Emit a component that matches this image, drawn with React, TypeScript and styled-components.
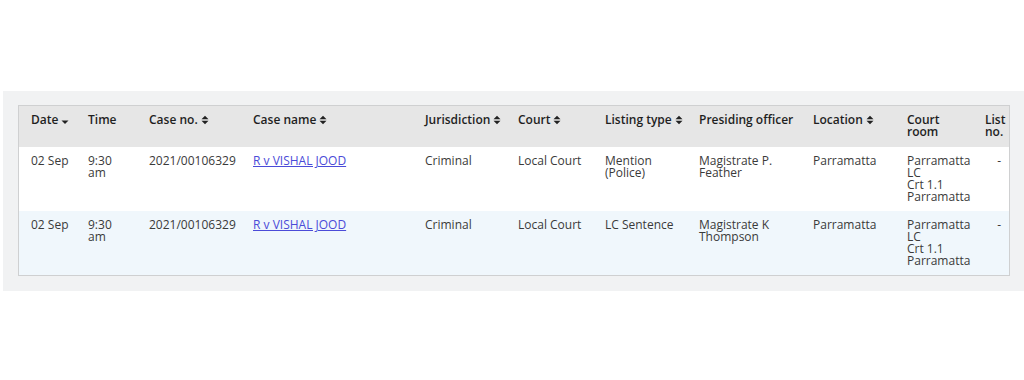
import styled, { createGlobalStyle } from 'styled-components';

const GlobalStyle = createGlobalStyle`
  body {
    margin: 0;
    background: #fff;
    font-family: "Open Sans", "Noto Sans", sans-serif;
  }
`;

const Page = styled.div`
  padding-top: 91px;
  padding-left: 3px;
`;

const Panel = styled.div`
  background: #f1f2f3;
  padding: 14px 14px 15px 15px;
`;

const Frame = styled.div`
  border: 1px solid #cfd0d1;
  background: #fff;
`;

const Table = styled.table`
  width: 100%;
  border-collapse: collapse;
  table-layout: fixed;
  font-size: 12px;
  line-height: 12px;
  color: #3a3a3a;
`;

const HeadRow = styled.tr`
  background: #e6e6e6;
`;

const HeadCell = styled.th`
  text-align: left;
  vertical-align: top;
  font-weight: 600;
  color: #1f1f1f;
  padding: 8px 12px 9px 12px;
  height: 24px;
`;

const HeadLabel = styled.span<{ $wrap?: boolean }>`
  white-space: ${p => (p.$wrap ? 'normal' : 'nowrap')};
`;

const Row = styled.tr<{ $shaded?: boolean }>`
  background: ${p => (p.$shaded ? '#f0f7fc' : '#fff')};
`;

const Cell = styled.td<{ $align?: 'left' | 'right'; $padRight?: number }>`
  text-align: ${p => p.$align ?? 'left'};
  vertical-align: top;
  padding: 8px ${p => p.$padRight ?? 2}px 8px 12px;
  height: 48px;
`;

// room name, room number and venue each start on their own line
const RoomCell = styled(Cell)`
  white-space: pre-line;
`;

const CaseLink = styled.a`
  color: #4b4bd8;
  text-decoration: underline;
`;

const SortIcon = styled.svg`
  display: inline-block;
  margin-left: 3px;
  vertical-align: -1px;
`;

type Sort = 'none' | 'both' | 'desc';

function SortMark({ kind }: { kind: Sort }) {
  if (kind === 'none') return null;
  if (kind === 'desc') {
    return (
      <SortIcon width="8" height="9" viewBox="0 0 8 9">
        <path d="M0.5 4.5 H7.5 L4 8 Z" fill="#222" />
      </SortIcon>
    );
  }
  return (
    <SortIcon width="8" height="10" viewBox="0 0 8 10">
      <path d="M0.5 4.3 L4 0.8 L7.5 4.3 Z" fill="#222" />
      <path d="M0.5 5.7 H7.5 L4 9.2 Z" fill="#222" />
    </SortIcon>
  );
}

const columns: { label: string; width: number; sort: Sort; wrap?: boolean }[] = [
  { label: 'Date', width: 57, sort: 'desc' },
  { label: 'Time', width: 61, sort: 'none' },
  { label: 'Case no.', width: 104, sort: 'both' },
  { label: 'Case name', width: 172, sort: 'both' },
  { label: 'Jurisdiction', width: 93, sort: 'both' },
  { label: 'Court', width: 87, sort: 'both' },
  { label: 'Listing type', width: 94, sort: 'both' },
  { label: 'Presiding officer', width: 114, sort: 'none' },
  { label: 'Location', width: 94, sort: 'both' },
  { label: 'Court room', width: 78, sort: 'none', wrap: true },
  { label: 'List no.', width: 36, sort: 'none', wrap: true },
];

const listings = [
  {
    date: '02 Sep',
    time: '9:30 am',
    caseNo: '2021/00106329',
    caseName: 'R v VISHAL JOOD',
    jurisdiction: 'Criminal',
    court: 'Local Court',
    listingType: 'Mention (Police)',
    officer: 'Magistrate P. Feather',
    location: 'Parramatta',
    room: 'Parramatta LC\nCrt 1.1\nParramatta',
    listNo: '-',
  },
  {
    date: '02 Sep',
    time: '9:30 am',
    caseNo: '2021/00106329',
    caseName: 'R v VISHAL JOOD',
    jurisdiction: 'Criminal',
    court: 'Local Court',
    listingType: 'LC Sentence',
    officer: 'Magistrate K Thompson',
    location: 'Parramatta',
    room: 'Parramatta LC\nCrt 1.1\nParramatta',
    listNo: '-',
  },
];

export default function App() {
  return (
    <>
      <GlobalStyle />
      <Page>
        <Panel>
          <Frame>
            <Table>
              <colgroup>
                {columns.map(c => (
                  <col key={c.label} style={{ width: c.width }} />
                ))}
              </colgroup>
              <thead>
                <HeadRow>
                  {columns.map(c => (
                    <HeadCell key={c.label}>
                      <HeadLabel $wrap={c.wrap}>
                        {c.label}
                        <SortMark kind={c.sort} />
                      </HeadLabel>
                    </HeadCell>
                  ))}
                </HeadRow>
              </thead>
              <tbody>
                {listings.map((l, i) => (
                  <Row key={i} $shaded={i % 2 === 1}>
                    <Cell>{l.date}</Cell>
                    <Cell $padRight={14}>{l.time}</Cell>
                    <Cell>{l.caseNo}</Cell>
                    <Cell>
                      <CaseLink href="#">{l.caseName}</CaseLink>
                    </Cell>
                    <Cell>{l.jurisdiction}</Cell>
                    <Cell>{l.court}</Cell>
                    <Cell $padRight={4}>{l.listingType}</Cell>
                    <Cell $padRight={12}>{l.officer}</Cell>
                    <Cell>{l.location}</Cell>
                    <RoomCell $padRight={12}>{l.room}</RoomCell>
                    <Cell $align="right" $padRight={8}>
                      {l.listNo}
                    </Cell>
                  </Row>
                ))}
              </tbody>
            </Table>
          </Frame>
        </Panel>
      </Page>
    </>
  );
}
